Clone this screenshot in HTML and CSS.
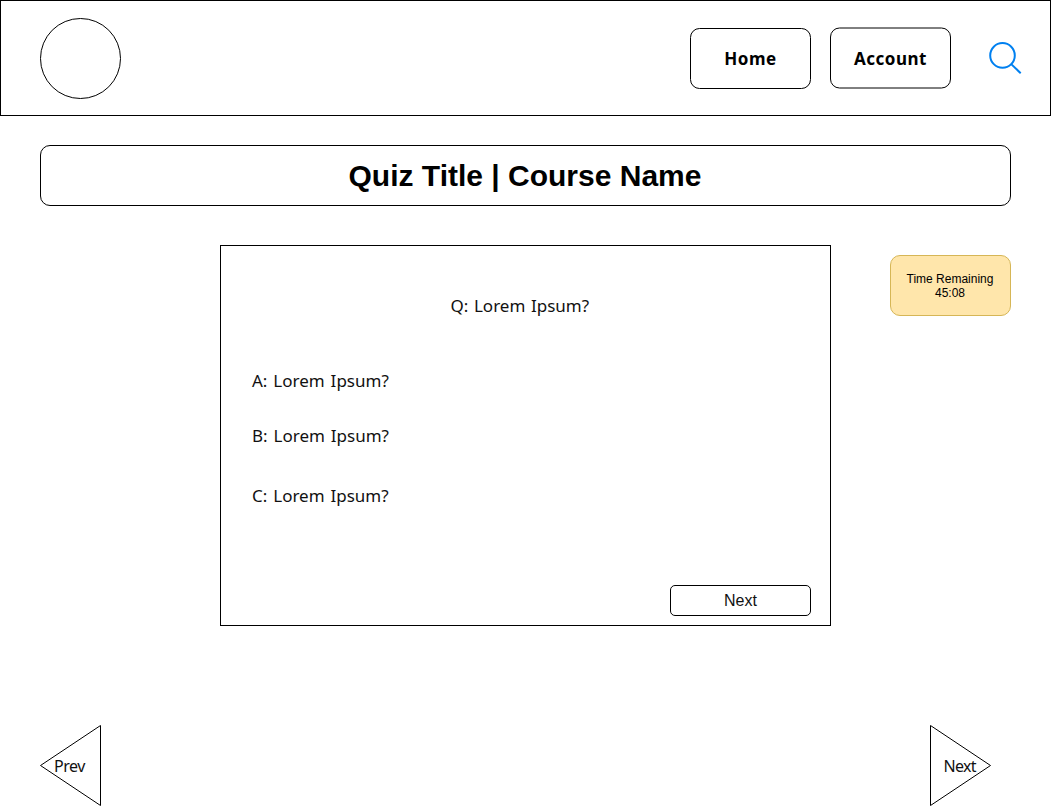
FILE: index.html
```html
<!DOCTYPE html>
<html lang="en">
<head>
<meta charset="utf-8">
<title>Quiz</title>
<link rel="stylesheet" href="styles.css">
</head>
<body>
<header class="header">
  <svg class="logo" width="81" height="81" viewBox="0 0 81 81"><circle cx="40.5" cy="40.5" r="40"/></svg>
  <nav class="nav">
    <a class="nav-button"><svg class="frame" width="121" height="61"><rect x=".5" y=".5" width="120" height="60" rx="9"/></svg><span class="home-label">Home</span></a>
    <a class="nav-button"><svg class="frame" width="121" height="61"><rect x=".5" y="0" width="120" height="60" rx="9"/></svg><span class="account-label">Account</span></a>
  </nav>
  <svg class="search" width="34" height="34" viewBox="0 0 34 34"><circle cx="13.5" cy="13.4" r="12.3"/><path d="M22.2 22.1 31.7 31.3"/></svg>
</header>
<h1 class="title"><span>Quiz Title | Course Name</span></h1>
<main class="content">
  <section class="card">
    <p class="question">Q: Lorem Ipsum?</p>
    <ul class="answers">
      <li class="answer answer-a">A: Lorem Ipsum?</li>
      <li class="answer answer-b">B: Lorem Ipsum?</li>
      <li class="answer answer-c">C: Lorem Ipsum?</li>
    </ul>
    <button class="next">Next</button>
  </section>
  <aside class="timer">Time Remaining<br>45:08</aside>
</main>
<footer class="pager">
  <svg class="arrow" width="62" height="82" viewBox="0 0 62 82"><path d="M60.5 .5V80.5L.5 40.5Z"/><text class="prev-label" x="14" y="47" textLength="31.5">Prev</text></svg>
  <svg class="arrow" width="62" height="82" viewBox="0 0 62 82"><path d="M.5 .5V80.5L60.5 40.5Z"/><text x="13.5" y="47" textLength="33">Next</text></svg>
</footer>
</body>
</html>
```
FILE: styles.css
```css
* { box-sizing: border-box; }
body {
  margin: 0;
  width: 1051px;
  height: 807px;
  overflow: hidden;
  background: #fff;
  color: #000;
  font-family: "Noto Sans", sans-serif;
}
.header {
  display: flex;
  align-items: flex-start;
  height: 116px;
  padding: 17px 27px 0 39px;
  border: 1px solid #000;
}
.logo { fill: none; stroke: #000; }
.nav {
  display: flex;
  gap: 19px;
  margin: 10px 0 0 569px;
}
.nav-button {
  display: grid;
  place-items: center;
  width: 121px;
  height: 61px;
  font-size: 17px;
  font-weight: 700;
  line-height: 20px;
  letter-spacing: .5px;
}
.nav-button > * { grid-area: 1 / 1; }
.frame { overflow: visible; fill: none; stroke: #000; }
.search {
  margin: 24px 0 0 38px;
  fill: none;
  stroke: #0080f0;
  stroke-width: 2;
}
.title {
  display: flex;
  align-items: center;
  justify-content: center;
  height: 61px;
  margin: 29px 40px 0;
  padding-right: 1px;
  border: 1px solid #000;
  border-radius: 10px;
  font: 700 30px/36px "Liberation Sans", Arial, sans-serif;
}
.content {
  display: flex;
  align-items: flex-start;
  gap: 59px;
  margin: 39px 40px 0 220px;
}
.card {
  display: flex;
  flex-direction: column;
  width: 611px;
  height: 381px;
  padding: 50px 19px 9px 31px;
  border: 1px solid #000;
  color: #111;
  font-size: 17px;
  line-height: 20px;
}
.question { margin: 0; padding-left: 198.5px; word-spacing: 1.2px; }
.answers {
  margin: 55px 0 0;
  padding: 0;
  list-style: none;
  word-spacing: 1.5px;
}
.answer-b { margin-top: 35px; }
.answer-c { margin-top: 40px; }
.next {
  align-self: flex-end;
  width: 141px;
  height: 31px;
  margin-top: auto;
  padding: 0;
  border: 1px solid #000;
  border-radius: 5px;
  background: #fff;
  color: #111;
  font: 16px/20px "Liberation Sans", Arial, sans-serif;
}
.timer {
  width: 121px;
  height: 61px;
  margin-top: 10px;
  padding: 16px 1px 0 0;
  border: 1px solid #d6b656;
  border-radius: 10px;
  background: #ffe6ab;
  font: 12px/14px "Liberation Sans", Arial, sans-serif;
  text-align: center;
}
.pager {
  display: flex;
  justify-content: space-between;
  margin: 99px 59px 0 40px;
}
.arrow { fill: none; stroke: #000; }
.arrow text {
  fill: #111;
  stroke: none;
  font-size: 16px;
}
```
